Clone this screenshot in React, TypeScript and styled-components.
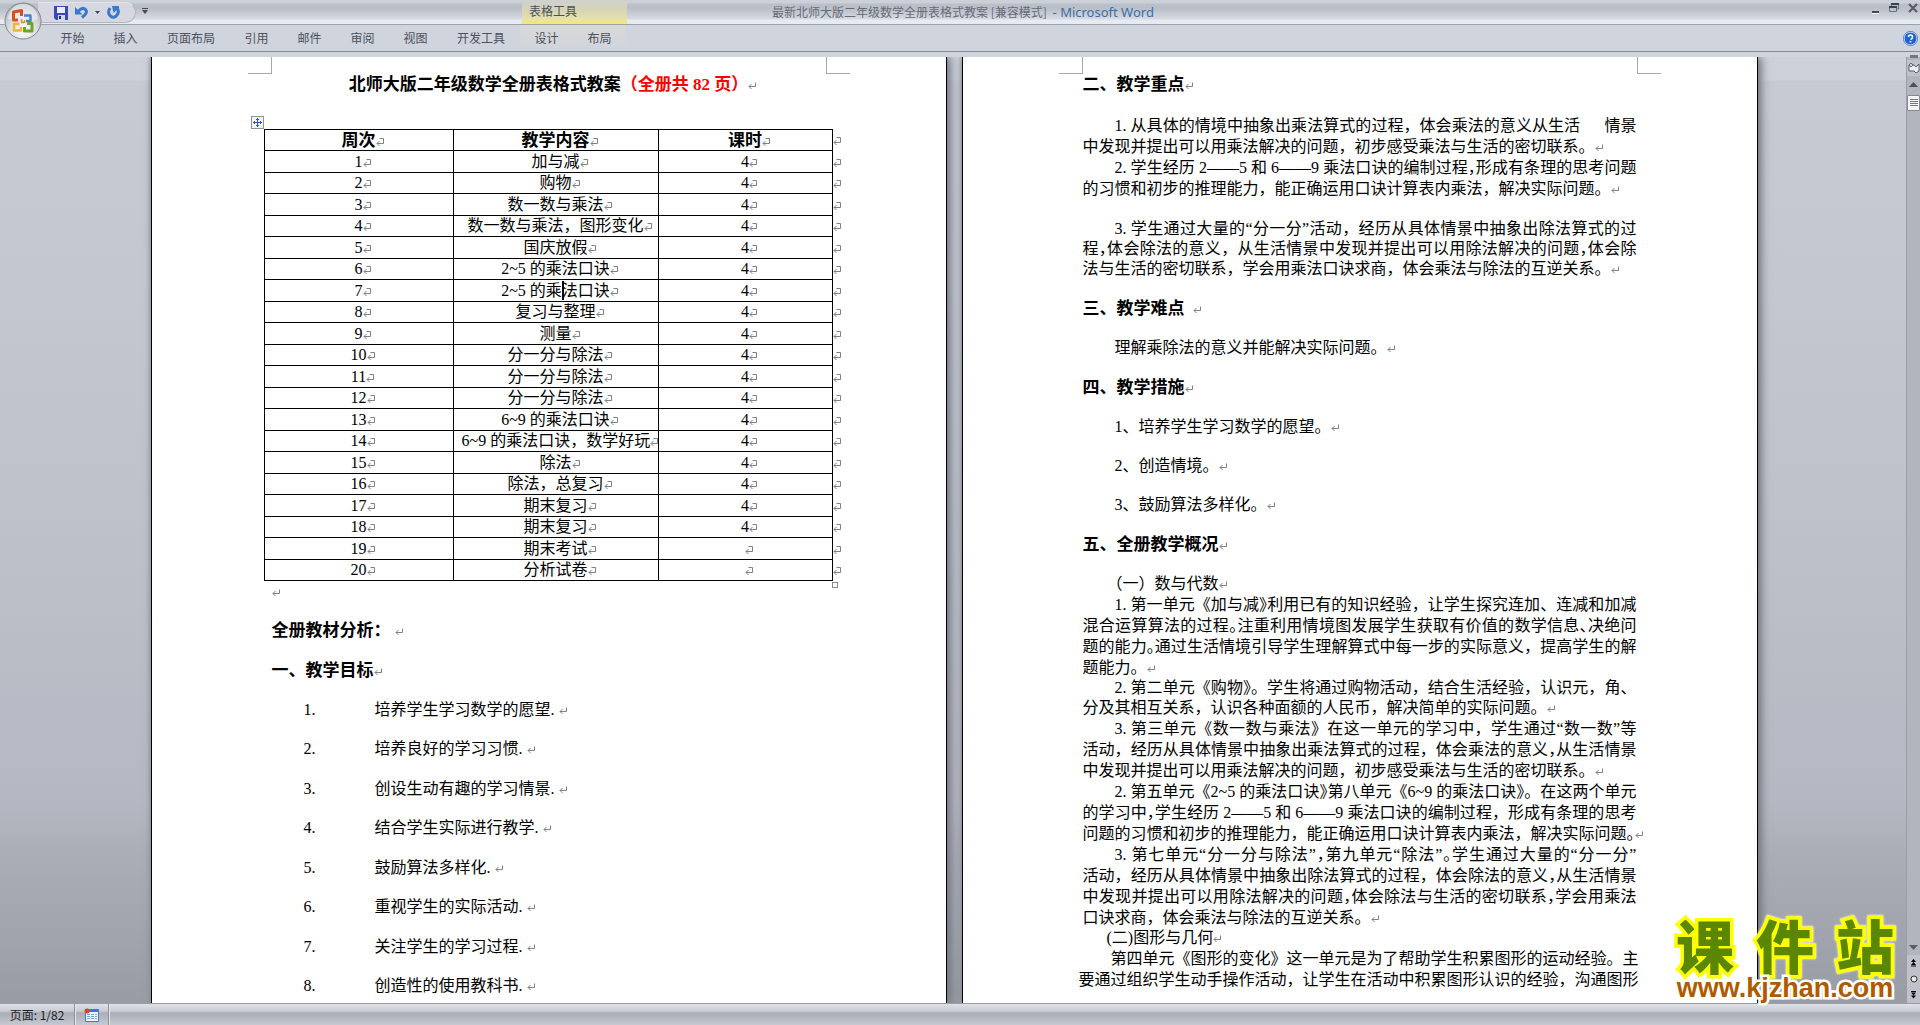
import React, { Fragment } from 'react';
import styled, { createGlobalStyle, css } from 'styled-components';

const UI = `"Noto Sans CJK SC", sans-serif`;
const DOC = `"Liberation Serif", "Noto Sans CJK SC", serif`;

const GlobalStyle = createGlobalStyle`
  * { box-sizing: border-box; }
  body { margin: 0; overflow: hidden; }
  button { border: 0; padding: 0; background: none; font: inherit; color: inherit; }
  p, h1, h2, h3, ol { margin: 0; padding: 0; }
`;

const Window = styled.div`
  display: flex;
  flex-direction: column;
  height: 100vh;
  background: #d0d4dd;
  font-family: ${UI};
  font-size: 12px;
  color: #4b505d;
`;

const Ribbon = styled.header`
  position: relative;
  flex: none;
`;

const TitleBar = styled.div`
  display: flex;
  align-items: flex-start;
  height: 25px;
  padding-left: 38px;
  border-bottom: 1px solid #9da1ab;
  background: linear-gradient(#ccd0d9 0 3px, #bbbfc9 4px 9px, #c3c7d0 12px, #d6dae1 19px, #e6eaf3 20px);
`;

const QuickAccess = styled.div`
  display: flex;
  align-items: center;
  width: 98px;
  height: 21px;
  margin-top: 2px;
  padding-left: 16px;
  gap: 7px;
  border: 1px solid #b1b5bf;
  border-top-color: #dfe2e8;
  border-left: 0;
  border-radius: 0 11px 11px 0;
  background: #d5d8e0;
`;

const IconButton = styled.button`
  display: flex;
  align-items: center;
`;

const CustomizeButton = styled(IconButton)`
  height: 21px;
  margin: 0 0 0 6px;
`;

const WindowTitle = styled.h1`
  flex: 1;
  padding-right: 94px;
  text-align: center;
  font-size: 12px;
  line-height: 24px;
  font-weight: 400;
  color: #666b77;
  white-space: nowrap;
`;

const AppName = styled.span`
  padding-left: 3px;
  font-family: "Noto Sans", sans-serif;
  font-size: 13px;
  color: #3a6ea9;
`;

const WindowButtons = styled.div`
  display: flex;
  align-items: center;
  gap: 9px;
  height: 16px;
  padding-right: 2px;
`;

const OfficeButton = styled.button`
  position: absolute;
  top: 2px;
  left: 4px;
  z-index: 2;
  width: 38px;
  height: 38px;
`;

const ContextLabel = styled.div`
  position: absolute;
  top: 0;
  left: 522px;
  width: 105px;
  height: 24px;
  padding: 3px 0 0 7px;
  line-height: 15px;
  background: linear-gradient(#cfd1cf, #d6d4b8 40%, #e8e3a8 85%, #f8ee50);
`;

const TabBar = styled.nav`
  display: flex;
  align-items: center;
  height: 27px;
  padding: 0 2px 0 46px;
  border-bottom: 1px solid #84888f;
  background: #d0d4dd;
`;

const Tab = styled.button<{ $wide?: boolean; $context?: boolean }>`
  width: ${p => (p.$wide ? 78 : 53)}px;
  height: 26px;
  text-align: center;
  line-height: 26px;
  ${p => p.$context && css`background: linear-gradient(#d8d9d8, #d0d4dd);`}
`;

const HelpButton = styled(IconButton)`
  margin-left: auto;
`;

const Workspace = styled.main`
  display: flex;
  flex: 1;
  min-height: 0;
  padding-top: 5px;
`;

const Desk = styled.div`
  display: flex;
  flex: 1;
  justify-content: center;
  gap: 15px;
  min-width: 0;
  padding-left: 2px;
  overflow: hidden;
  background: linear-gradient(#cdd1da 0 23px, #c7cad3 24px, #c4c7d0 25%, #bdc1ca 50%, #b5b8c2 79%, #abaeb7 84%, #989ca4);
`;

const Page = styled.section`
  position: relative;
  flex: none;
  width: 796px;
  padding: 8px 120px 0;
  border: solid #000;
  border-width: 0 1px;
  background: #fff;
  box-shadow: 3px 0 9px #6a6d75, -1px 0 4px #9a9ea8;
  font-family: ${DOC};
  font-size: 16px;
  line-height: 21px;
  color: #000;
`;

const CropMark = styled.i<{ $side: 'left' | 'right' }>`
  position: absolute;
  top: 0;
  width: 24px;
  height: 17px;
  border-bottom: 1px solid #a5a8b3;
  ${p => p.$side === 'left'
    ? css`left: 96px; border-right: 1px solid #a5a8b3;`
    : css`right: 96px; border-left: 1px solid #a5a8b3;`}
`;

const DocTitle = styled.h2`
  height: 40px;
  padding-left: 8px;
  line-height: 40px;
  font-size: 17px;
  text-align: center;
  white-space: nowrap;
`;

const Red = styled.span`
  color: #f00;
`;

const Heading = styled.h3`
  height: 40px;
  line-height: 40px;
  font-size: 17px;
  font-weight: 700;
  white-space: nowrap;
`;

const Sentence = styled.p`
  height: 39px;
  padding-left: 32px;
  line-height: 37px;
  white-space: nowrap;
`;

const Group = styled.div<{ $close?: boolean }>`
  padding: ${p => (p.$close ? 8 : 10)}px 0;
`;

const Line = styled.p<{ $tight?: boolean; $fill?: boolean; $indent?: number }>`
  padding-left: ${p => p.$indent ?? 0}px;
  line-height: ${p => (p.$tight ? 20 : 21)}px;
  white-space: nowrap;
  text-align: ${p => (p.$fill ? 'justify' : 'left')};
  text-align-last: ${p => (p.$fill ? 'justify' : 'left')};
`;

const Outdent = styled.div`
  margin-left: -4px;
`;

const Half = styled.span`
  font-feature-settings: "halt";
`;

const TableWrap = styled.div`
  position: relative;
  width: 582px;
  margin: 24px 0 0 -8px;
`;

const Schedule = styled.table`
  width: 582px;
  table-layout: fixed;
  border-collapse: collapse;
`;

const Row = styled.tr`
  height: 21px;
  &:nth-child(even) { height: 22px; }
`;

const cell = css`
  padding: 0 0 0 8px;
  border: 1px solid #000;
  line-height: 20px;
  text-align: center;
  white-space: nowrap;
`;

const HeadCell = styled.th`
  ${cell}
  padding-top: 2px;
  font-size: 17px;
  line-height: 18px;
`;

const Cell = styled.td`
  ${cell}
`;

const EndCell = styled.td`
  padding: 0;
  line-height: 20px;
`;

const Column = styled.col<{ $w: number }>`
  width: ${p => p.$w}px;
`;

const Caret = styled.i`
  position: absolute;
  width: 2px;
  height: 19px;
  background: #000;
`;

const MoveHandle = styled.button`
  position: absolute;
  top: -13px;
  left: -13px;
  display: flex;
  width: 13px;
  height: 13px;
  border: 1px solid #8d929c;
  background: #f4f6ee;
`;

const SizeHandle = styled.i`
  position: absolute;
  right: 8px;
  bottom: -7px;
  width: 6px;
  height: 6px;
  border: 1px solid #8a8a8a;
`;

const AfterTable = styled.p`
  height: 30px;
  line-height: 21px;
`;

const Goals = styled.ol`
  list-style: none;
`;

const Goal = styled.li`
  display: flex;
  height: 39px;
  padding-left: 32px;
  line-height: 37px;
  white-space: nowrap;
  &:nth-child(even) { height: 40px; }
`;

const GoalNumber = styled.span`
  width: 71px;
`;

const Mark = styled.svg`
  width: 8px;
  height: 8px;
  fill: none;
  stroke: #808080;
`;

const ScrollBar = styled.aside`
  display: flex;
  flex-direction: column;
  align-items: center;
  width: 14px;
  border-left: 1px solid #9a9ea8;
  background: #b1b5be;
`;

const SplitBar = styled.i`
  width: 8px;
  height: 3px;
  margin: -2px 0 2px;
  background: #74777e;
`;

const ScrollButton = styled.button<{ $h: number; $plain?: boolean }>`
  display: flex;
  align-items: center;
  justify-content: center;
  width: 13px;
  height: ${p => p.$h}px;
  background: ${p => (p.$plain ? '#b1b5be' : '#bfc2cb')};
`;

const Thumb = styled.button`
  display: flex;
  align-items: center;
  justify-content: center;
  width: 13px;
  height: 16px;
  margin: 3px 0 auto;
  border: 1px solid #85888f;
  border-radius: 1px;
  background: #f5f5f6;
`;

const StatusBar = styled.footer`
  display: flex;
  flex: none;
  height: 22px;
  border-top: 1px solid #999ca3;
  background: linear-gradient(#dfe1e7, #caccd4 7px, #a9adb7 9px, #c6c9d2);
  color: #1d1f24;
`;

const StatusItem = styled.button<{ $w: number }>`
  display: flex;
  align-items: center;
  justify-content: center;
  width: ${p => p.$w}px;
  border-right: 1px solid #8d919b;
  box-shadow: 1px 0 #e4e6eb;
  font-size: 12px;
  line-height: 19px;
`;

const Watermark = styled.div`
  position: absolute;
  right: 22px;
  bottom: 24px;
  width: 226px;
  font-family: "Liberation Sans", "Noto Sans CJK SC", sans-serif;
  text-align: center;
  white-space: nowrap;
  paint-order: stroke fill;
  stroke-linejoin: round;
`;

const SiteName = styled.div`
  display: flex;
  justify-content: space-between;
  padding: 0 4px;
  font-size: 58px;
  line-height: 52px;
  font-weight: 900;
  color: #5a8600;
  -webkit-text-stroke: 7px #ff0;
  filter: drop-shadow(0 0 1px #fff);
`;

const SiteUrl = styled.div`
  position: relative;
  font-size: 27px;
  line-height: 26px;
  font-weight: 700;
  color: #b05a00;
  -webkit-text-stroke: 5px #fff;
`;

const ReturnMark = () => (
  <Mark viewBox="0 0 8 8"><path d="M7.5 0.5V4.5H1M3.5 2L1 4.5L3.5 7" /></Mark>
);
const CellMark = () => (
  <Mark viewBox="0 0 8 8"><path d="M3.5 .5H7.5V5.5H1M3.5 3L1 5.5L3.5 8" /></Mark>
);

const OfficeLogo = () => (
  <svg width="38" height="38" viewBox="0 0 38 38">
    <defs>
      <radialGradient id="orb" cx="50%" cy="75%" r="75%">
        <stop offset="0" stopColor="#fff" />
        <stop offset=".5" stopColor="#dcdde1" />
        <stop offset="1" stopColor="#a9acb4" />
      </radialGradient>
    </defs>
    <circle cx="19" cy="19" r="18" fill="url(#orb)" stroke="#85888f" />
    <path d="M4 17a15 15 0 0 1 30 0q-15 5-30 0z" fill="#f5f5f6" opacity=".6" />
    <g fill="none" strokeLinejoin="round">
      <path d="M14 18H9.500V10l8-1.500V14" stroke="#d9501e" strokeWidth="3" />
      <path d="M20 13.500h6.500V19H22" stroke="#3f86cf" strokeWidth="2.400" />
      <path d="M15.500 22H10v6.500h7V25" stroke="#f3b42b" strokeWidth="2.400" />
      <path d="M23 21.500h5V29h-7.500V25" stroke="#6fa32b" strokeWidth="3" />
      <path d="M17.500 17v3M20.500 18v3M17 20.500h3" stroke="#e08a32" strokeWidth="1.500" />
    </g>
  </svg>
);

const SaveIcon = () => (
  <svg width="14" height="14" viewBox="0 0 14 14">
    <path d="M0 0h14v14H2L0 12z" fill="#3c48b8" />
    <path d="M3 1h8v6H3z" fill="#e8edf9" />
    <path d="M4 9h7v5H4z" fill="#d2d6e2" />
    <path d="M5 10h2v3H5z" fill="#232a66" />
  </svg>
);
const UndoIcon = () => (
  <svg width="13" height="13" viewBox="0 0 13 13">
    <path d="M3 5.500Q7.500 .5 10.500 3.500T7 11.500" fill="none" stroke="#3a78cd" strokeWidth="3" />
    <path d="M0 1v7.500h7.500z" fill="#3a78cd" />
  </svg>
);
const RedoIcon = () => (
  <svg width="13" height="13" viewBox="0 0 13 13">
    <path d="M3 2Q0 7 3.500 10T10 9T9.500 2" fill="none" stroke="#3a78cd" strokeWidth="3" />
    <path d="M5 0h7v2L6.500 7z" fill="#3a78cd" />
  </svg>
);
const DownArrow = () => (
  <svg width="5" height="4" viewBox="0 0 5 4"><path d="M0 0h5L2.500 3z" fill="#45484f" /></svg>
);

const tabs: [string, boolean?, boolean?][] = [
  ['开始'], ['插入'], ['页面布局', true], ['引用'], ['邮件'], ['审阅'], ['视图'], ['开发工具', true],
  ['设计', false, true], ['布局', false, true],
];

const schedule = [
  '加与减', '购物', '数一数与乘法', '数一数与乘法，图形变化', '国庆放假', '2~5 的乘法口诀', '2~5 的乘|法口诀',
  '复习与整理', '测量', '分一分与除法', '分一分与除法', '分一分与除法', '6~9 的乘法口诀', '6~9 的乘法口诀，数学好玩',
  '除法', '除法，总复习', '期末复习', '期末复习', '期末考试', '分析试卷',
];

const goals = [
  '培养学生学习数学的愿望.', '培养良好的学习习惯.', '创设生动有趣的学习情景.', '结合学生实际进行教学.',
  '鼓励算法多样化.', '重视学生的实际活动.', '关注学生的学习过程.', '创造性的使用教科书.',
];

/* A paragraph is a list of set lines; punctuation between braces is set at half width. */
const setText = (text: string) =>
  text.split(/[{}]/).map((part, i) => (i % 2 ? <Half key={i}>{part}</Half> : <Fragment key={i}>{part}</Fragment>));

const Paragraph = ({ lines, tight, indent = 32, open }: { lines: string[]; tight?: boolean; indent?: number; open?: boolean }) => (
  <>
    {lines.map((line, i) => {
      const last = i === lines.length - 1 && !open;
      return (
        <Line key={i} $tight={tight} $fill={!last} $indent={i === 0 ? indent : 0}>
          {setText(line)}{last && <ReturnMark />}
        </Line>
      );
    })}
  </>
);

export default function App() {
  return (
    <Window>
      <GlobalStyle />
      <Ribbon>
        <OfficeButton aria-label="Office"><OfficeLogo /></OfficeButton>
        <TitleBar>
          <QuickAccess>
            <IconButton aria-label="保存"><SaveIcon /></IconButton>
            <IconButton aria-label="撤消"><UndoIcon /></IconButton>
            <IconButton aria-label="撤消选项"><DownArrow /></IconButton>
            <IconButton aria-label="重复"><RedoIcon /></IconButton>
          </QuickAccess>
          <CustomizeButton aria-label="自定义快速访问工具栏">
            <svg width="6" height="6" viewBox="0 0 6 6"><path d="M0 0h6v1H0zM0 2h6L3 6z" fill="#45484f" /></svg>
          </CustomizeButton>
          <WindowTitle>最新北师大版二年级数学全册表格式教案 [兼容模式] <AppName>- Microsoft Word</AppName></WindowTitle>
          <WindowButtons>
            <IconButton aria-label="最小化">
              <svg width="8" height="12" viewBox="0 0 8 12"><path d="M0 9h7v2H0z" fill="#44484f" /><path d="M0 11h7v1H0z" fill="#fff" /></svg>
            </IconButton>
            <IconButton aria-label="还原">
              <svg width="10" height="10" viewBox="0 0 10 10"><path d="M2.500 3V1.500H9.500V6H8M.5 4.500h7v4h-7z" fill="none" stroke="#66707f" /><path d="M2 1h8M0 4h8" stroke="#3d4149" strokeWidth="2" /></svg>
            </IconButton>
            <IconButton aria-label="关闭">
              <svg width="10" height="10" viewBox="0 0 10 10"><path d="M1 1L9 9M9 1L1 9" stroke="#565d6b" strokeWidth="2.200" /></svg>
            </IconButton>
          </WindowButtons>
        </TitleBar>
        <ContextLabel>表格工具</ContextLabel>
        <TabBar>
          {tabs.map(([name, wide, context]) => <Tab key={name} $wide={wide} $context={context}>{name}</Tab>)}
          <HelpButton aria-label="帮助">
            <svg width="15" height="15" viewBox="0 0 15 15">
              <circle cx="7.500" cy="7.500" r="6.500" fill="#2063d5" stroke="#fff" />
              <circle cx="7.500" cy="7.500" r="7" fill="none" stroke="#4a78bd" />
              <path d="M5.500 6Q5.500 4 7.500 4T9.500 6T7.500 8.500M7.500 10v1.500" fill="none" stroke="#fff" strokeWidth="1.600" />
            </svg>
          </HelpButton>
        </TabBar>
      </Ribbon>

      <Workspace>
        <Desk>
          <Page>
            <CropMark $side="left" /><CropMark $side="right" />
            <DocTitle>北师大版二年级数学全册表格式教案<Red>（全册共 82 页）</Red><ReturnMark /></DocTitle>
            <TableWrap>
              <MoveHandle aria-label="移动表格">
                <svg width="11" height="11" viewBox="0 0 11 11"><path d="M5.500 1v9M1 5.500h9M4 2.500h3M4 8.500h3M2.500 4v3M8.500 4v3" stroke="#2c59b5" /></svg>
              </MoveHandle>
              <Schedule>
                <colgroup><Column $w={189} /><Column $w={205} /><Column $w={174} /><Column $w={14} /></colgroup>
                <tbody>
                  <Row>
                    <HeadCell>周次<CellMark /></HeadCell><HeadCell>教学内容<CellMark /></HeadCell><HeadCell>课时<CellMark /></HeadCell>
                    <EndCell><CellMark /></EndCell>
                  </Row>
                  {schedule.map((topic, i) => {
                    const [before, after] = topic.split('|');
                    return (
                      <Row key={i}>
                        <Cell>{i + 1}<CellMark /></Cell>
                        <Cell>{before}{after && <Caret />}{after}<CellMark /></Cell>
                        <Cell>{i < 18 && '4'}<CellMark /></Cell>
                        <EndCell><CellMark /></EndCell>
                      </Row>
                    );
                  })}
                </tbody>
              </Schedule>
              <SizeHandle />
            </TableWrap>
            <AfterTable><ReturnMark /></AfterTable>
            <Heading>全册教材分析： <ReturnMark /></Heading>
            <Heading>一、教学目标<ReturnMark /></Heading>
            <Goals>
              {goals.map((goal, i) => (
                <Goal key={goal}><GoalNumber>{i + 1}.</GoalNumber><span>{goal} <ReturnMark /></span></Goal>
              ))}
            </Goals>
          </Page>

          <Page>
            <CropMark $side="left" /><CropMark $side="right" />
            <Heading>二、教学重点<ReturnMark /></Heading>
            <Group>
              <Paragraph lines={['1. 从具体的情境中抽象出乘法算式的过程，体会乘法的意义从生活\u00a0\u00a0\u00a0\u00a0\u00a0\u00a0情景', '中发现并提出可以用乘法解决的问题，初步感受乘法与生活的密切联系。']} />
              <Paragraph lines={['2. 学生经历 2——5 和 6——9 乘法口诀的编制过程{，}形成有条理的思考问题', '的习惯和初步的推理能力，能正确运用口诀计算表内乘法，解决实际问题。']} />
            </Group>
            <Group>
              <Paragraph tight lines={['3. 学生通过大量的“分一分”活动，经历从具体情景中抽象出除法算式的过', '程{，}体会除法的意义，从生活情景中发现并提出可以用除法解决的问题{，}体会除', '法与生活的密切联系，学会用乘法口诀求商，体会乘法与除法的互逆关系。']} />
            </Group>
            <Heading>三、教学难点 &nbsp;<ReturnMark /></Heading>
            <Sentence>理解乘除法的意义并能解决实际问题。<ReturnMark /></Sentence>
            <Heading>四、教学措施<ReturnMark /></Heading>
            <Sentence>1、培养学生学习数学的愿望。<ReturnMark /></Sentence>
            <Sentence>2、创造情境。<ReturnMark /></Sentence>
            <Sentence>3、鼓励算法多样化。<ReturnMark /></Sentence>
            <Heading>五、全册教学概况<ReturnMark /></Heading>
            <Group $close>
              <Paragraph indent={24} lines={['（一）数与代数']} />
              <Paragraph lines={['1. 第一单元《加与减{》}利用已有的知识经验，让学生探究连加、连减和加减', '混合运算算法的过程{。}注重利用情境图发展学生获取有价值的数学信息{、}决绝问', '题的能力{。}通过生活情境引导学生理解算式中每一步的实际意义，提高学生的解', '题能力。']} />
              <Paragraph tight lines={['2. 第二单元《购物》。学生将通过购物活动，结合生活经验，认识元，角、', '分及其相互关系，认识各种面额的人民币，解决简单的实际问题。']} />
              <Paragraph lines={['3. 第三单元《数一数与乘法》在这一单元的学习中，学生通过“数一数”等', '活动，经历从具体情景中抽象出乘法算式的过程，体会乘法的意义{，}从生活情景', '中发现并提出可以用乘法解决的问题，初步感受乘法与生活的密切联系。']} />
              <Paragraph lines={['2. 第五单元《2~5 的乘法口诀{》}第八单元《6~9 的乘法口诀》。在这两个单元', '的学习中{，}学生经历 2——5 和 6——9 乘法口诀的编制过程，形成有条理的思考', '问题的习惯和初步的推理能力，能正确运用口诀计算表内乘法，解决实际问题{。}']} />
              <Paragraph lines={['3. 第七单元“分一分与除法”{，}第九单元“除法”{。}学生通过大量的“分一分”', '活动，经历从具体情景中抽象出除法算式的过程，体会除法的意义{，}从生活情景', '中发现并提出可以用除法解决的问题{，}体会除法与生活的密切联系{，}学会用乘法', '口诀求商，体会乘法与除法的互逆关系。']} />
              <Paragraph tight indent={24} lines={['(二)图形与几何']} />
              <Outdent>
                <Paragraph open lines={['第四单元《图形的变化》这一单元是为了帮助学生积累图形的运动经验。主', '要通过组织学生动手操作活动，让学生在活动中积累图形认识的经验，沟通图形']} />
              </Outdent>
            </Group>
          </Page>
        </Desk>
        <ScrollBar>
          <SplitBar />
          <ScrollButton $h={16} aria-label="标尺">
            <svg width="12" height="12" viewBox="0 0 12 12"><path d="M1 3h5l2 2 3-3v7l-3 2-2-2H1z" fill="#f0edf6" stroke="#545d6c" /><circle cx="3" cy="3" r="1.500" fill="#fff" stroke="#545d6c" /></svg>
          </ScrollButton>
          <ScrollButton $h={16} $plain aria-label="向上滚动"><svg width="9" height="5" viewBox="0 0 9 5"><path d="M0 5L4.500 0L9 5z" fill="#4c505b" /></svg></ScrollButton>
          <Thumb aria-label="滚动块"><svg width="8" height="8" viewBox="0 0 8 8"><path d="M0 .5h8M0 2.500h8M0 4.500h8M0 6.500h8" stroke="#74777e" /></svg></Thumb>
          <ScrollButton $h={15} $plain aria-label="向下滚动"><svg width="9" height="5" viewBox="0 0 9 5"><path d="M0 0h9L4.500 5z" fill="#5b5f6b" /></svg></ScrollButton>
          <ScrollButton $h={16} aria-label="前一页"><svg width="7" height="8" viewBox="0 0 7 8"><path d="M3.500 0L6 3H1zM3.500 3L6 6H1zM1 6.500h5v1H1z" fill="#000" /></svg></ScrollButton>
          <ScrollButton $h={16} aria-label="选择浏览对象"><svg width="8" height="8" viewBox="0 0 8 8"><circle cx="4" cy="4" r="3" fill="#e5e5e5" stroke="#333" /></svg></ScrollButton>
          <ScrollButton $h={16} aria-label="下一页"><svg width="7" height="8" viewBox="0 0 7 8"><path d="M1 0h5v1H1zM1 1.500h5L3.500 4.500zM1 4.500h5L3.500 7.500z" fill="#000" /></svg></ScrollButton>
        </ScrollBar>
      </Workspace>

      <StatusBar>
        <StatusItem $w={75}>页面: 1/82</StatusItem>
        <StatusItem $w={34} aria-label="录制宏">
          <svg width="15" height="14" viewBox="0 0 15 14">
            <path d="M1.500 1.500h13v12h-13z" fill="#eef3fc" stroke="#4b78c0" />
            <path d="M1 1h14v3H1z" fill="#3f74d9" />
            <path d="M3 6.500h10M3 8.500h10M3 10.500h10" stroke="#86a4d6" strokeDasharray="3 1" />
            <circle cx="3" cy="3" r="2.500" fill="#d8432c" />
          </svg>
        </StatusItem>
      </StatusBar>

      <Watermark>
        <SiteName><span>课</span><span>件</span><span>站</span></SiteName>
        <SiteUrl>www.kjzhan.com</SiteUrl>
      </Watermark>
    </Window>
  );
}
